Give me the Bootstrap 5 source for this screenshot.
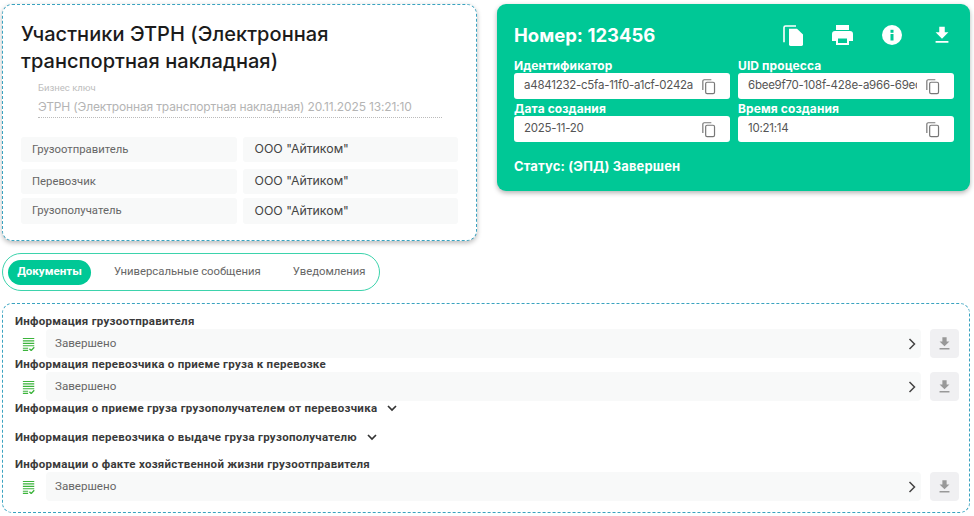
<!DOCTYPE html>
<html lang="ru"><head><meta charset="utf-8"><title>ЭТРН</title>
<link href="https://cdn.jsdelivr.net/npm/bootstrap@5.3.0/dist/css/bootstrap.min.css" rel="stylesheet">
<style>
html,body{height:516px;overflow:hidden;background:#fff}
body{font-family:Inter,"Open Sans",sans-serif;color:#333}
.shell{padding:4px 4px 0 2px}
.top-row{gap:20px;height:237px}
.part-card{width:475px;height:237px;border:1px dashed #3aa3c0;border-radius:10px;box-shadow:0 2px 5px rgba(0,0,0,.28);padding:16px 18px 0 18px}
.part-title{font-size:20px;line-height:27px;font-weight:500;color:#1b1b1b;margin:0;letter-spacing:.05px}
.bkey{margin:7px 17px 0 17px;width:404px;height:35px;border-bottom:1px dotted #bbb;box-sizing:content-box}
.bkey-l{font-size:9.5px;line-height:12px;color:#bdbdbd;font-family:Roboto,sans-serif}
.bkey-v{font-size:12px;line-height:18px;margin-top:4px;color:#b4b4b4;white-space:nowrap;letter-spacing:-.15px}
.p-rows{margin-top:19px}
.p-row{gap:6px}
.p-row+.p-row{margin-top:7px}
.p-row+.p-row+.p-row{margin-top:4px}
.p-row:last-child .p-cell{height:26px}
.p-cell{width:216px;background:#f8f9f9;border-radius:3px;height:25px;display:flex;align-items:center;padding:1px 0 0 11px;font-size:11.300px;color:#666;font-family:Roboto,sans-serif}
.p-cell+.p-cell{padding:0 0 0 12px;font-family:Inter,sans-serif;font-size:12.300px;color:#444}
.num-card{width:473px;height:187px;background:#00c896;border-radius:9px;box-shadow:0 2px 5px rgba(0,0,0,.3);padding:17px 17px 0 17px;color:#fff}
.num-head{height:28px}
.num-title{font-size:18.500px;line-height:28px;font-weight:700;white-space:nowrap}
.head-ico{gap:29px}
.f-grid{display:grid;grid-template-columns:216px 216px;column-gap:8px;margin-top:10px}
.f-lab{font-size:12px;line-height:14px;font-weight:700;letter-spacing:.1px;white-space:nowrap;height:14px}
.f-box{height:26px;background:#fff;border-radius:3px;display:flex;align-items:center;padding:0 13px 0 10px;color:#555;font-size:11.500px;letter-spacing:-.25px;margin-bottom:3px}
.f-val{width:169px;overflow:hidden;white-space:nowrap;flex:none}
.f-box svg{margin-left:auto;flex:none}
.status-line{font-size:13px;font-weight:700;line-height:16px;margin-top:13px;letter-spacing:.15px}
.tab-pill{width:378px;height:38px;border:1.5px solid #3dd3ac;border-radius:19px;margin-top:12px;padding-left:5px;font-family:Roboto,sans-serif;font-size:11.300px;color:#666}
.tab-on{width:83px;height:25px;background:#00c896;color:#fff;font-weight:700;border-radius:13px;display:flex;align-items:center;justify-content:center;font-size:11.600px}
.tab-a{margin-left:23px;white-space:nowrap}
.tab-b{margin-left:32px;white-space:nowrap}
.doc-panel{height:210px;width:968px;border:1px dashed #3aa3c0;border-radius:10px;margin-top:12px;padding:9px 10px 0 12px;font-family:Roboto,sans-serif}
.doc-lab{font-size:11.500px;font-weight:700;line-height:16px;color:#3a3a3a;letter-spacing:.28px;white-space:nowrap;height:16px}
.doc-row{height:29px;gap:9px}
.doc-ico{width:22px;flex:none;display:flex;justify-content:flex-start;padding-left:7px}
.doc-bar{flex:1;background:#f8f9f9;border-radius:4px;height:29px;padding:0 3px 0 9px;font-size:11.600px;color:#666;display:flex;align-items:center;justify-content:space-between}
.doc-btn{width:29px;height:29px;background:#f0f0f2;border-radius:4px;display:flex;align-items:center;justify-content:center;flex:none}
.doc-gap{margin-top:-2px}
.doc-col{margin-top:-1px;height:16px;gap:9px}
.doc-col+.doc-col{margin-top:13px}
.doc-last{margin-top:11px}
</style></head>
<body>
<svg width="0" height="0" class="position-absolute"><defs>
<symbol id="copy" viewBox="0 0 24 24"><path fill="none" stroke="#777" stroke-width="1.700" d="M16 2.500H6A2 2 0 0 0 4 4.500V17"/><rect x="8" y="6" width="12.500" height="16" rx="2" fill="none" stroke="#777" stroke-width="1.700"/></symbol>
<symbol id="dl" viewBox="0 0 24 24"><path d="M19 9h-4V3H9v6H5l7 7 7-7zM5 18.500v2h14v-2H5z"/></symbol>
<symbol id="doc" viewBox="0 0 16 16"><path fill="#3cb43c" d="M1 1h13v1.300H1zM1 3.800h13v1.300H1zM1 6.600h13v1.300H1zM1 9.400h13v1.300H1zM1 12.200h6v1.300H1zM1 14.700h6V16H1z"/><path fill="none" stroke="#3cb43c" stroke-width="1.500" d="M8.500 13.500l2 2 3.500-3.800"/></symbol>
<symbol id="chev" viewBox="0 0 12 12"><path fill="none" stroke="#333" stroke-width="1.700" d="M2 4l4 4 4-4"/></symbol>
<symbol id="chevr" viewBox="0 0 12 12"><path fill="none" stroke="#444" stroke-width="1.500" d="M3.500 1l5 5-5 5"/></symbol>
</defs></svg>
<div class="shell">
<div class="d-flex top-row">
  <div class="part-card bg-white">
    <h1 class="part-title">Участники ЭТРН (Электронная транспортная накладная)</h1>
    <div class="bkey"><div class="bkey-l">Бизнес ключ</div><div class="bkey-v">ЭТРН (Электронная транспортная накладная) 20.11.2025 13:21:10</div></div>
    <div class="d-flex flex-column p-rows">
      <div class="d-flex p-row"><div class="p-cell">Грузоотправитель</div><div class="p-cell">ООО "Айтиком"</div></div>
      <div class="d-flex p-row"><div class="p-cell">Перевозчик</div><div class="p-cell">ООО "Айтиком"</div></div>
      <div class="d-flex p-row"><div class="p-cell">Грузополучатель</div><div class="p-cell">ООО "Айтиком"</div></div>
    </div>
  </div>
  <div class="num-card">
    <div class="d-flex align-items-center justify-content-between num-head">
      <div class="num-title">Номер: 123456</div>
      <div class="d-flex align-items-center head-ico">
        <svg width="20" height="21" viewBox="0 0 20 22" preserveAspectRatio="none" fill="#fff"><path d="M6 4h8l6 6v10.500A1.500 1.500 0 0 1 18.500 22H7.500A1.500 1.500 0 0 1 6 20.500z"/><path fill="none" stroke="#fff" stroke-width="1.600" d="M13 1H2.500A1.500 1.500 0 0 0 1 2.500V18"/></svg>
        <svg width="21" height="20" viewBox="0 0 21 20" fill="#fff"><path d="M4 0h13v5H4z"/><path fill-rule="evenodd" d="M3 6h15a3 3 0 0 1 3 3v7h-4v4H4v-4H0V9a3 3 0 0 1 3-3zm3 7.500V18h9v-4.500z"/></svg>
        <svg width="20" height="20" viewBox="0 0 20 20"><circle cx="10" cy="10" r="10" fill="#fff"/><rect x="8.500" y="9" width="3" height="6.500" fill="#00c896"/><rect x="8.500" y="4.800" width="3" height="3" fill="#00c896"/></svg>
        <svg width="22" height="22" viewBox="0 0 24 24" fill="#fff"><use href="#dl"/></svg>
      </div>
    </div>
    <div class="f-grid">
      <div><div class="f-lab">Идентификатор</div><div class="f-box"><span class="f-val">a4841232-c5fa-11f0-a1cf-0242ac</span><svg width="17" height="17"><use href="#copy"/></svg></div></div>
      <div><div class="f-lab">UID процесса</div><div class="f-box"><span class="f-val">6bee9f70-108f-428e-a966-69ec12</span><svg width="17" height="17"><use href="#copy"/></svg></div></div>
      <div><div class="f-lab">Дата создания</div><div class="f-box"><span class="f-val">2025-11-20</span><svg width="17" height="17"><use href="#copy"/></svg></div></div>
      <div><div class="f-lab">Время создания</div><div class="f-box"><span class="f-val">10:21:14</span><svg width="17" height="17"><use href="#copy"/></svg></div></div>
    </div>
    <div class="status-line">Статус: (ЭПД) Завершен</div>
  </div>
</div>
<div class="d-flex align-items-center tab-pill">
  <div class="tab-on">Документы</div><div class="tab-a">Универсальные сообщения</div><div class="tab-b">Уведомления</div>
</div>
<div class="doc-panel">
  <div class="doc-lab">Информация грузоотправителя</div>
  <div class="d-flex doc-row"><div class="doc-ico align-items-center"><svg width="14" height="14"><use href="#doc"/></svg></div><div class="doc-bar">Завершено<svg width="12" height="12"><use href="#chevr"/></svg></div><div class="doc-btn"><svg width="17" height="17" fill="#999"><use href="#dl"/></svg></div></div>
  <div class="doc-lab doc-gap">Информация перевозчика о приеме груза к перевозке</div>
  <div class="d-flex doc-row"><div class="doc-ico align-items-center"><svg width="14" height="14"><use href="#doc"/></svg></div><div class="doc-bar">Завершено<svg width="12" height="12"><use href="#chevr"/></svg></div><div class="doc-btn"><svg width="17" height="17" fill="#999"><use href="#dl"/></svg></div></div>
  <div class="d-flex align-items-center doc-col"><div class="doc-lab">Информация о приеме груза грузополучателем от перевозчика</div><svg width="12" height="12"><use href="#chev"/></svg></div>
  <div class="d-flex align-items-center doc-col"><div class="doc-lab">Информация перевозчика о выдаче груза грузополучателю</div><svg width="12" height="12"><use href="#chev"/></svg></div>
  <div class="doc-lab doc-last">Информации о факте хозяйственной жизни грузоотправителя</div>
  <div class="d-flex doc-row"><div class="doc-ico align-items-center"><svg width="14" height="14"><use href="#doc"/></svg></div><div class="doc-bar">Завершено<svg width="12" height="12"><use href="#chevr"/></svg></div><div class="doc-btn"><svg width="17" height="17" fill="#999"><use href="#dl"/></svg></div></div>
</div>
</div>
<script src="https://cdn.jsdelivr.net/npm/bootstrap@5.3.0/dist/js/bootstrap.bundle.min.js"></script>
</body></html>
